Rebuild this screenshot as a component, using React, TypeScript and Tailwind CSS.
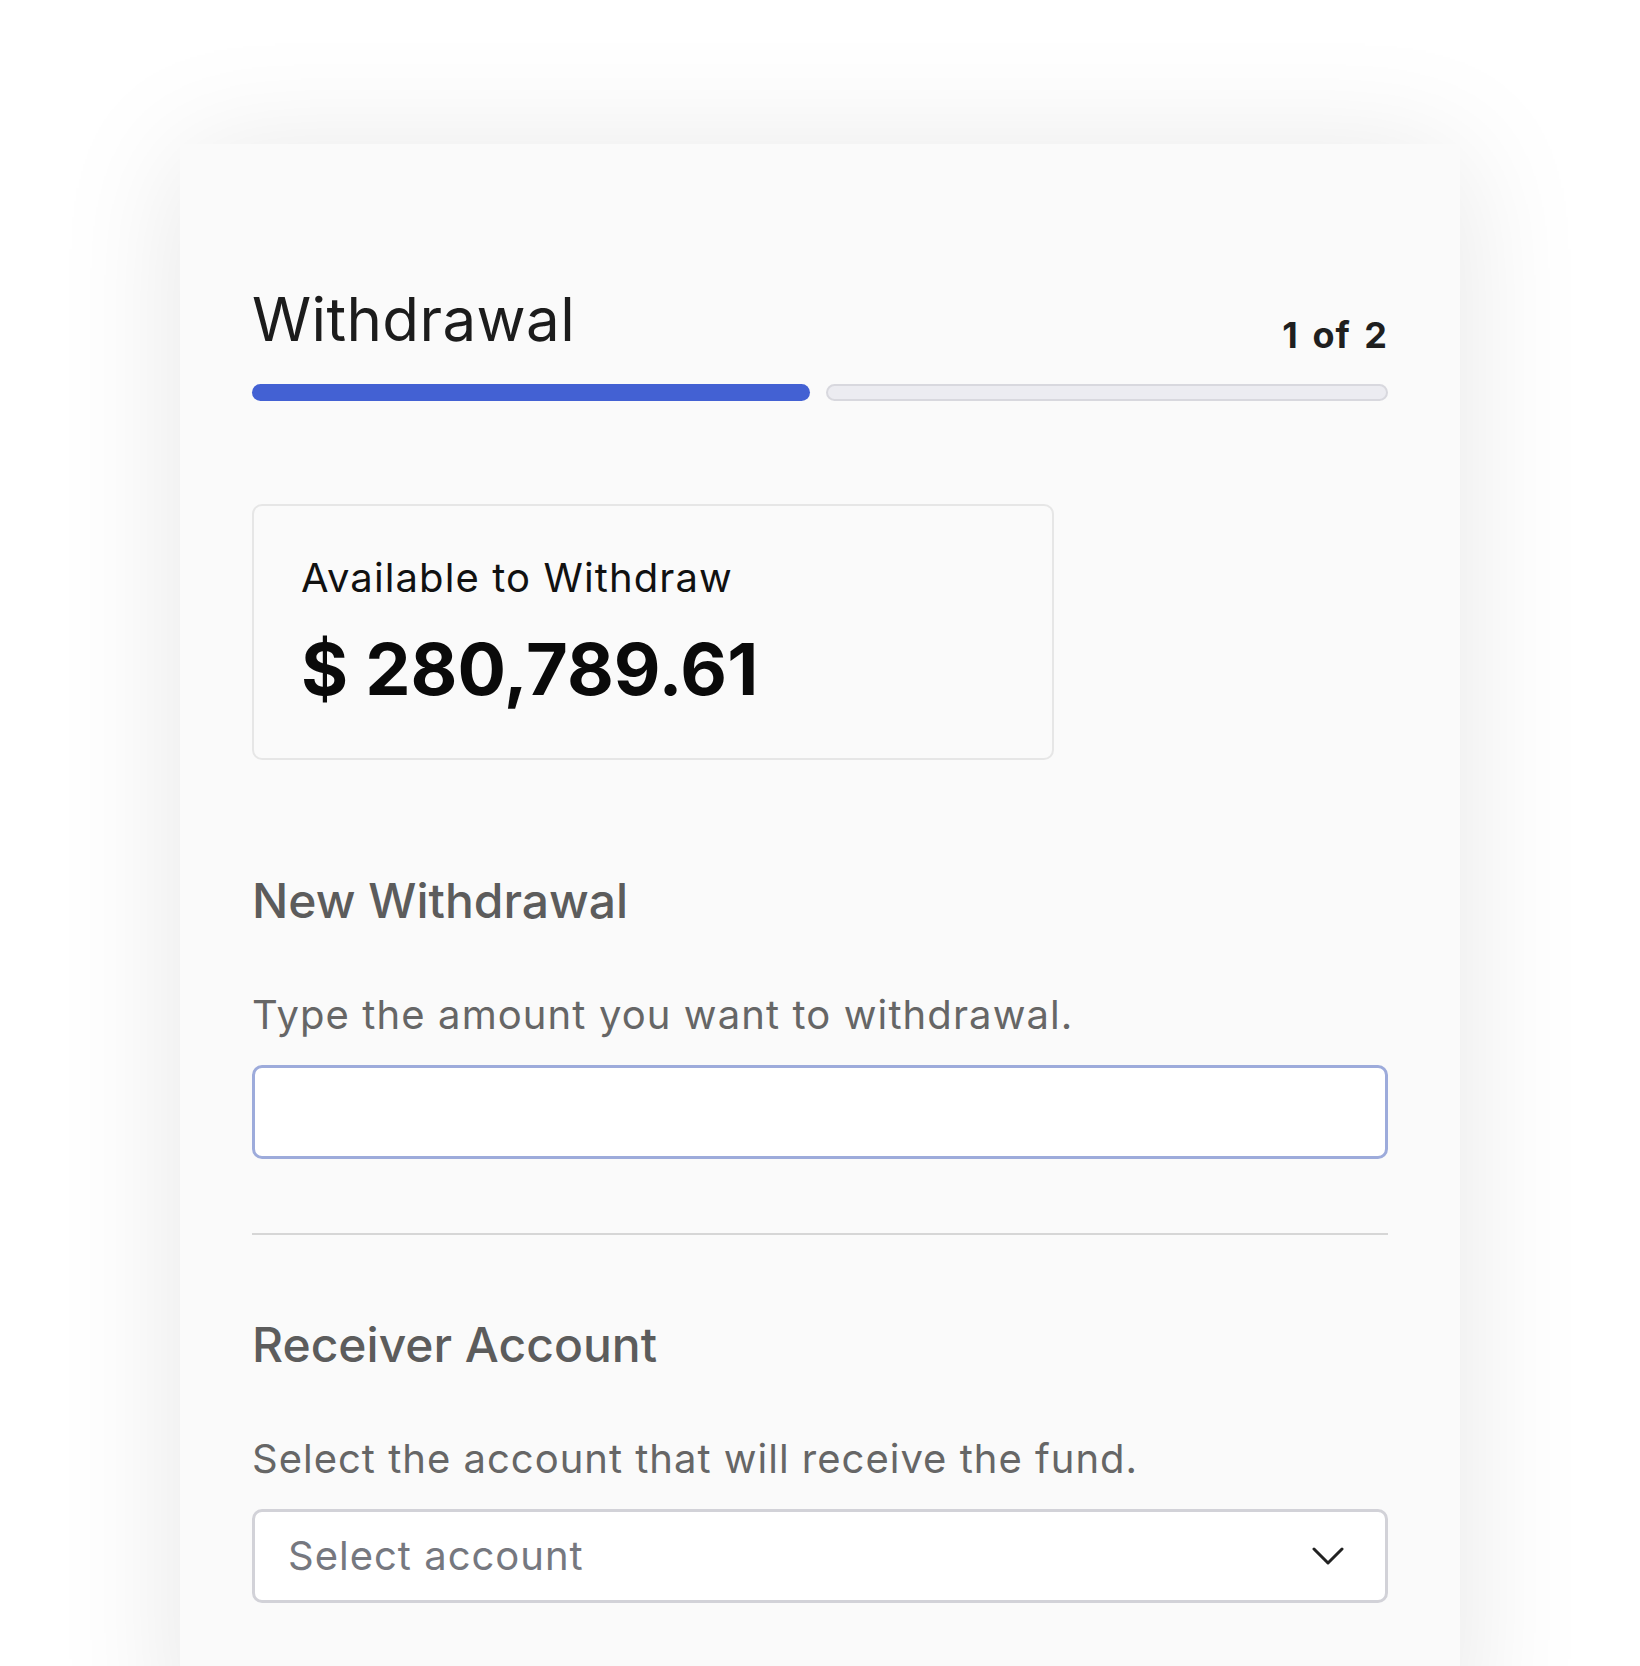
import React from "react";

export default function App() {
  return (
    <div className="h-[1666px] overflow-hidden bg-white pt-[144px] font-['Inter','Noto_Sans',sans-serif]">
      <div className="mx-auto min-h-[1600px] w-[1280px] bg-[#fafafa] px-[72px] pt-[145px] shadow-[0_10px_120px_rgba(0,0,0,0.10)]">
        <div className="flex items-end justify-between">
          <h1 className="text-[60px] leading-none font-normal tracking-[0.4px] text-[#1c1c1c]">Withdrawal</h1>
          <span className="text-[36px] leading-[28px] font-bold tracking-[1px] text-[#1f1f1f] [word-spacing:4px]">1 of 2</span>
        </div>

        <div className="mt-[35px] flex h-[17px] gap-4">
          <div className="flex-1 rounded-full bg-[#4361d3]" />
          <div className="flex-1 rounded-full border-2 border-[#d8d8de] bg-[#ececf1]" />
        </div>

        <div className="mt-[103px] w-[802px] rounded-[10px] border-2 border-[#e6e6e6] bg-[#fafafa] pt-[52px] pb-[53px] pl-[47px]">
          <p className="text-[40px] leading-none tracking-[1.1px] text-[#111111]">Available to Withdraw</p>
          <p className="mt-[35px] text-[72px] leading-none font-bold text-[#0a0a0a]">$ 280,789.61</p>
        </div>

        <h2 className="mt-[117px] text-[48px] leading-none font-medium text-[#5c5c5c]">New Withdrawal</h2>
        <p className="mt-[70px] text-[40px] leading-none tracking-[1.1px] text-[#666666]">Type the amount you want to withdrawal.</p>
        <input
          type="text"
          aria-label="Amount"
          className="mt-[30px] block h-[94px] w-full rounded-[10px] border-[3px] border-[#9dabdb] bg-white px-[34px] text-[40px] outline-none"
        />

        <div className="mt-[74px] h-[2px] w-full bg-[#d6d6d6]" />

        <h2 className="mt-[86px] text-[48px] leading-none font-medium text-[#5c5c5c]">Receiver Account</h2>
        <p className="mt-[70px] text-[40px] leading-none tracking-[1px] text-[#666666]">Select the account that will receive the fund.</p>
        <div className="mt-[30px] flex h-[94px] w-full items-center justify-between rounded-[10px] border-[3px] border-[#d2d2d8] bg-white pr-[41px] pl-[33px]">
          <span className="text-[40px] leading-none tracking-[1px] text-[#76787f]">Select account</span>
          <svg width="32" height="18" viewBox="0 0 32 18" fill="none" aria-hidden="true">
            <path d="M2 2 L16 16 L30 2" stroke="#222222" strokeWidth="3" strokeLinecap="round" strokeLinejoin="round" />
          </svg>
        </div>
      </div>
    </div>
  );
}
